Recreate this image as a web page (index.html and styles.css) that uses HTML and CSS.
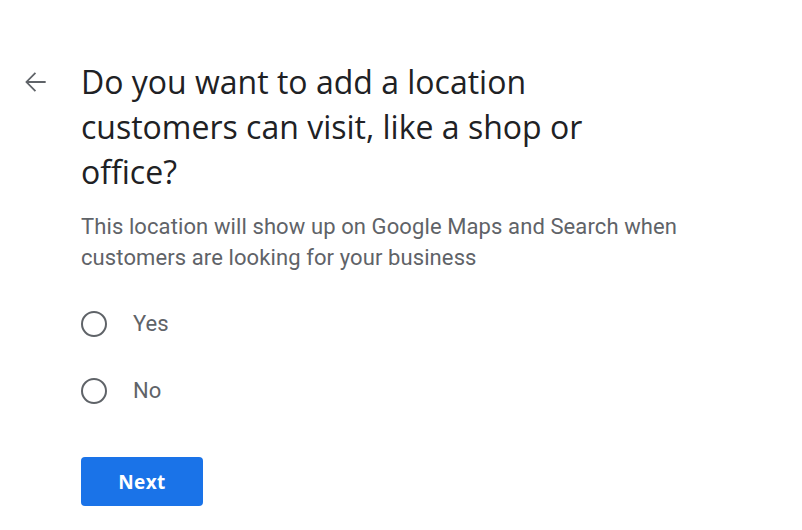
FILE: index.html
```html
<!DOCTYPE html>
<html>
	<head>
		<meta charset="UTF-8">
		<title>Add a location</title>
		<link rel="stylesheet" href="styles.css">
	</head>
	<body>
		<div class="page">
			<a href="javascript:;" class="back">
				<svg width="32" height="32" viewBox="0 0 24 24"><path d="M20 11.25H7.2l5.6-5.6-.95-.95L4.65 12l7.2 7.3.95-.95-5.6-5.6H20v-1.5z" fill="#5f6368"/></svg>
			</a>
			<div class="main">
				<h1 class="title">Do you want to add a location customers can visit, like a shop or office?</h1>
				<p class="desc">This location will show up on Google Maps and Search when customers are looking for your business</p>
				<div class="options">
					<label class="option"><span class="radio"></span><span class="label">Yes</span></label>
					<label class="option"><span class="radio"></span><span class="label">No</span></label>
				</div>
				<button class="next">Next</button>
			</div>
		</div>
	</body>
</html>
```

FILE: styles.css
```css
*{padding: 0;margin: 0;box-sizing: border-box;}
body{background: #fff;font-family: Roboto, "Liberation Sans", sans-serif;}
.page{display: flex;padding: 59px 0 0 19px;gap: 30px;}
.back{display: flex;width: 32px;height: 32px;margin-top: 7px;}
.main{width: 520px;}
.title{font-family: "Open Sans", Roboto, sans-serif;font-weight: 400;font-size: 32px;line-height: 45px;color: #202124;}
.desc{margin-top: 17px;font-size: 22px;line-height: 31px;color: #5f6368;width: 620px;letter-spacing: 0.1px;}
.options{display: flex;flex-direction: column;margin-top: 17px;}
.option{display: flex;align-items: center;height: 67px;gap: 26px;}
.radio{width: 26px;height: 26px;border: 2px solid #5f6368;border-radius: 50%;}
.label{font-size: 22px;color: #5f6368;}
.next{margin-top: 33px;width: 122px;height: 49px;border: none;border-radius: 4px;background: #1a73e8;color: #fff;font-family: "Open Sans", Roboto, sans-serif;font-weight: 700;font-size: 19px;letter-spacing: 0.4px;}
```
